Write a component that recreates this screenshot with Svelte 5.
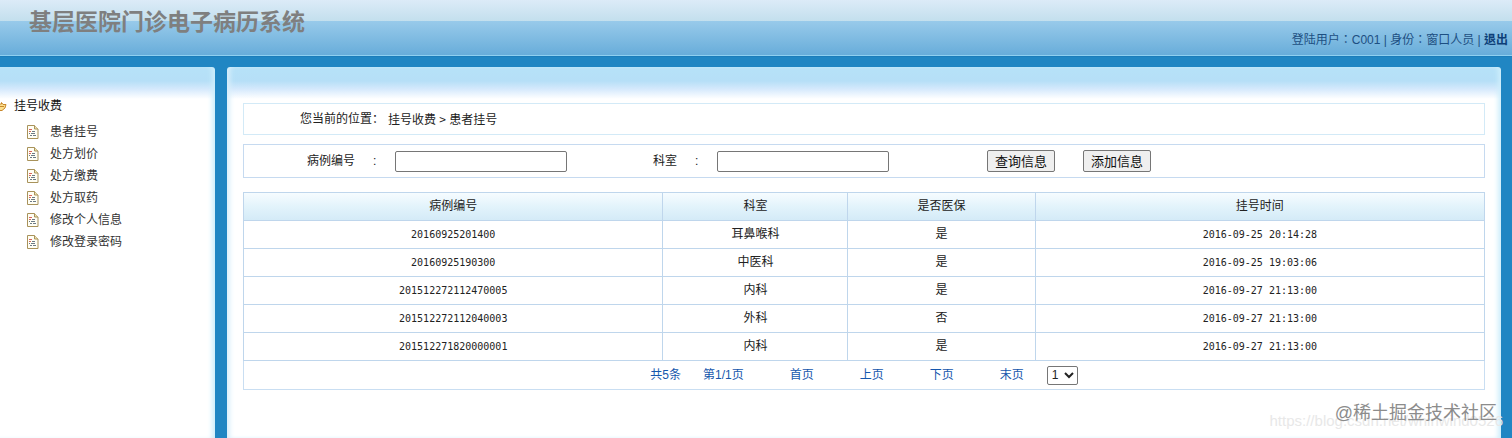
<script>
    let caseNo = $state("");
    let department = $state("");
    let page = $state("1");

    const menu = ["患者挂号", "处方划价", "处方缴费", "处方取药", "修改个人信息", "修改登录密码"];
    const pages = ["首页", "上页", "下页", "末页"];

    const rows = [
        { no: "20160925201400", dept: "耳鼻喉科", insured: "是", time: "2016-09-25 20:14:28" },
        { no: "20160925190300", dept: "中医科", insured: "是", time: "2016-09-25 19:03:06" },
        { no: "201512272112470005", dept: "内科", insured: "是", time: "2016-09-27 21:13:00" },
        { no: "201512272112040003", dept: "外科", insured: "否", time: "2016-09-27 21:13:00" },
        { no: "201512271820000001", dept: "内科", insured: "是", time: "2016-09-27 21:13:00" }
    ];
</script>

<div class="app">
    <header>
        <h1>基层医院门诊电子病历系统</h1>
        <p class="user">登陆用户：C001 | 身份：窗口人员 | <a href="#logout">退出</a></p>
    </header>

    <div class="body">
        <nav class="sidebar">
            <h2>
                <svg width="7" height="12" viewBox="0 0 7 12">
                    <path d="M0 4h1.500V2.500L3 4.500h3L5 8 2 10.500H0" fill="#fbdf8e" stroke="#c8872a" />
                    <path d="M0 6.500h4" stroke="#c8872a" />
                </svg>
                挂号收费
            </h2>
            <ul>
                {#each menu as item}
                    <li>
                        <svg width="12" height="14" viewBox="0 0 12 14">
                            <path d="M.5.5h7l3.500 3.500v9.500H.5z" fill="#fffef4" stroke="#a8925a" />
                            <path d="M7.500.5v3.500H11" fill="#efe3b4" stroke="#a8925a" />
                            <path d="M2 4.500h3M2 6.500h2" stroke="#d8645c" />
                            <path d="M5 6.500h3M2 8.500h1M4 8.500h4M3 10.500h2M6 10.500h3" stroke="#6c7a86" />
                        </svg>
                        <a href="#menu">{item}</a>
                    </li>
                {/each}
            </ul>
        </nav>

        <main>
            <div class="crumbs">
                <span>您当前的位置：</span>
                <span class="path">挂号收费 <i>&gt;</i> 患者挂号</span>
            </div>

            <form class="search" onsubmit={(e) => e.preventDefault()}>
                <div class="field">
                    <label for="caseNo">病例编号</label>
                    <span class="colon">:</span>
                    <input id="caseNo" type="text" bind:value={caseNo} />
                </div>
                <div class="field">
                    <label for="department">科室</label>
                    <span class="colon">:</span>
                    <input id="department" type="text" bind:value={department} />
                </div>
                <div class="buttons">
                    <button type="submit">查询信息</button>
                    <button type="button">添加信息</button>
                </div>
            </form>

            <table>
                <thead>
                    <tr>
                        <th class="col-no">病例编号</th>
                        <th class="col-dept">科室</th>
                        <th class="col-insured">是否医保</th>
                        <th>挂号时间</th>
                    </tr>
                </thead>
                <tbody>
                    {#each rows as row}
                        <tr>
                            <td class="num">{row.no}</td>
                            <td>{row.dept}</td>
                            <td>{row.insured}</td>
                            <td class="num">{row.time}</td>
                        </tr>
                    {/each}
                </tbody>
            </table>

            <div class="pager">
                <span>共5条</span>
                <span class="count">第1/1页</span>
                {#each pages as name}
                    <a href="#page">{name}</a>
                {/each}
                <select aria-label="页码" bind:value={page}>
                    <option>1</option>
                </select>
            </div>
        </main>
    </div>

    <div class="watermark url">https://blog.csdn.net/whirlwind0526</div>
    <div class="watermark site">@稀土掘金技术社区</div>
</div>

<style>
    :global(body) {
        margin: 0;
        background: #2086c3;
    }

    * {
        box-sizing: border-box;
    }

    .app {
        position: relative;
        display: flex;
        flex-direction: column;
        min-height: 100vh;
        overflow: hidden;
        font-family: "Liberation Sans", "Noto Sans CJK SC", sans-serif;
        font-size: 12px;
        line-height: 16px;
        color: #333;
    }

    a {
        color: inherit;
        text-decoration: none;
    }

    header {
        display: flex;
        justify-content: space-between;
        align-items: flex-start;
        height: 56px;
        padding: 7px 4px 0 29px;
        border-bottom: 1px solid #8fd0f0;
        background: linear-gradient(#dcebf8, #c3dfed 21px, #98caea 21px, #68adda);
    }

    h1 {
        margin: 0;
        font-size: 23px;
        line-height: 30px;
        color: #7f7f7f;
    }

    .user {
        margin: 0;
        padding-top: 25px;
        font-family: "Liberation Sans", "Noto Sans CJK TC", sans-serif;
        color: #1d4f82;
    }

    .user a {
        font-weight: bold;
        color: #0d3f78;
    }

    .body {
        display: flex;
        flex: 1;
        gap: 12px;
        padding: 10px 11px 0 0;
        border-top: 1px solid #1b7dbb;
    }

    .sidebar,
    main {
        background: linear-gradient(#b6e2f8, #b6dff7 14px, #d5e9fc 22px, #fff 32px) #fff;
    }

    .sidebar {
        width: 215px;
        flex-shrink: 0;
        padding-top: 31px;
        border-top-right-radius: 3px;
        box-shadow: inset -5px 0 5px -2px #cdeefb;
    }

    .sidebar h2 {
        display: flex;
        align-items: center;
        gap: 7px;
        margin: 0;
        font-size: 12px;
        font-weight: normal;
        line-height: 16px;
        color: #111;
    }

    .sidebar ul {
        margin: 7px 0 0;
        padding: 0 0 0 27px;
        list-style: none;
    }

    .sidebar li {
        display: flex;
        align-items: center;
        gap: 11px;
        height: 22px;
    }

    main {
        flex: 1;
        padding: 36px 16px 0;
        border-radius: 3px 3px 0 0;
        box-shadow: inset 5px 0 5px -2px #d9effb, inset -5px 0 5px -2px #cdeefb;
    }

    .crumbs {
        display: flex;
        align-items: center;
        gap: 4px;
        height: 32px;
        padding-left: 56px;
        border: 1px solid #d3eaf7;
        color: #222;
    }

    .path i {
        font-family: "Noto Sans CJK SC", sans-serif;
        font-style: normal;
    }

    .search {
        display: flex;
        align-items: center;
        height: 34px;
        margin-top: 9px;
        padding-left: 63px;
        border: 1px solid #c6daf0;
        color: #222;
    }

    .field {
        display: flex;
        align-items: center;
        margin-right: 86px;
    }

    .colon {
        width: 22px;
        margin-left: 18px;
    }

    .field input {
        width: 172px;
        height: 21px;
        border: 1px solid #767676;
        border-radius: 2px;
        background: #fff;
    }

    .buttons {
        display: flex;
        gap: 28px;
        margin-left: 12px;
    }

    .buttons button {
        width: 68px;
        height: 22px;
        padding: 0;
        border: 1px solid #767676;
        border-radius: 2px;
        background: #efefef;
        font: 13px/18px "Noto Sans CJK SC", sans-serif;
        color: #111;
    }

    table {
        width: 100%;
        margin-top: 14px;
        border-collapse: collapse;
        table-layout: fixed;
        color: #222;
    }

    th,
    td {
        height: 28px;
        padding: 0 0 2px;
        border: 1px solid #bfd6ec;
        font-weight: normal;
        text-align: center;
    }

    thead tr {
        background: linear-gradient(#f6fcff, #e2f3fb 50%, #d3eaf7);
    }

    .col-no {
        width: 33.8%;
    }

    .col-dept {
        width: 14.9%;
    }

    .col-insured {
        width: 15.1%;
    }

    .num {
        padding: 0;
        font-family: "DejaVu Sans Mono", monospace;
        font-size: 10px;
    }

    .pager {
        display: flex;
        align-items: center;
        justify-content: center;
        height: 29px;
        border: 1px solid #c9def2;
        border-top: 0;
        color: #1557ad;
    }

    .pager .count {
        margin-left: 22px;
    }

    .pager a {
        margin-left: 46px;
    }

    .pager select {
        width: 31px;
        height: 19px;
        margin-left: 23px;
        border: 1px solid #767676;
        border-radius: 2px;
        background: #fff;
        font: 12px "Liberation Sans", sans-serif;
        color: #222;
    }

    .watermark {
        position: absolute;
        white-space: nowrap;
        pointer-events: none;
    }

    .url {
        right: 9px;
        bottom: 8px;
        font-size: 15px;
        line-height: 18px;
        color: #e8e8e8;
    }

    .site {
        right: 15px;
        bottom: 13px;
        font-size: 18px;
        line-height: 24px;
        color: #8c8c8c;
    }
</style>
